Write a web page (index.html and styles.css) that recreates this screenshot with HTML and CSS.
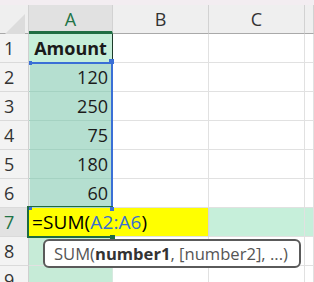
FILE: index.html
```html
<!DOCTYPE html>
<html lang="en">
<head>
<meta charset="UTF-8">
<title>Sheet</title>
<link rel="stylesheet" href="styles.css">
</head>
<body>

<div class="topbar"></div>

<div class="sheet">
    <!-- header row -->
    <div class="corner">
        <svg width="29" height="29" viewBox="0 0 29 29"><polygon points="25,9 25,29 5,29" fill="#dcdcdc"/></svg>
    </div>
    <div class="colhead on">A</div>
    <div class="colhead">B</div>
    <div class="colhead">C</div>
    <div class="colhead"></div>

    <div class="rowhead">1</div>
    <div class="cell title">Amount</div>
    <div class="cell"></div><div class="cell"></div><div class="cell"></div>

    <div class="rowhead">2</div>
    <div class="cell pick">120</div>
    <div class="cell"></div><div class="cell"></div><div class="cell"></div>

    <div class="rowhead">3</div>
    <div class="cell pick">250</div>
    <div class="cell"></div><div class="cell"></div><div class="cell"></div>

    <div class="rowhead">4</div>
    <div class="cell pick">75</div>
    <div class="cell"></div><div class="cell"></div><div class="cell"></div>

    <div class="rowhead">5</div>
    <div class="cell pick">180</div>
    <div class="cell"></div><div class="cell"></div><div class="cell"></div>

    <div class="rowhead">6</div>
    <div class="cell pick">60</div>
    <div class="cell"></div><div class="cell"></div><div class="cell"></div>

    <div class="rowhead on">7</div>
    <div class="cell edit">=SUM(<span class="ref">A2:A6</span>)</div>
    <div class="cell band"></div><div class="cell band"></div>

    <div class="rowhead">8</div>
    <div class="cell colband"></div>
    <div class="cell"></div><div class="cell"></div><div class="cell"></div>

    <div class="rowhead">9</div>
    <div class="cell colband"></div>
    <div class="cell"></div><div class="cell"></div><div class="cell"></div>

    <!-- range reference + active cell -->
    <div class="range">
        <i class="dot tl"></i><i class="dot tr"></i><i class="dot bl"></i><i class="dot br"></i>
    </div>
    <div class="active"><i class="handle"></i></div>

    <div class="tip">SUM(<b>number1</b>, [number2], ...)</div>
</div>

</body>
</html>
```

FILE: styles.css
```css
body {
    margin: 0;
    background: #fff;
    font-family: "Open Sans", sans-serif;
    overflow: hidden;
}

.topbar {
    height: 5px;
    background: #f3edf1;
}

/* ===== grid ===== */
.sheet {
    position: relative;
    display: grid;
    grid-template-columns: 29px 84px 96px 96px 1fr;
    grid-auto-rows: 29px;
}

.corner {
    background: #efefef;
    border-right: 1px solid #d2d2d2;
    border-bottom: 1px solid #a9a9a9;
    box-sizing: border-box;
}

.corner svg { display: block; }

.colhead {
    display: flex;
    align-items: center;
    justify-content: center;
    background: #efefef;
    color: #333;
    font-size: 18px;
    border-right: 1px solid #d2d2d2;
    border-bottom: 1px solid #a9a9a9;
    box-sizing: border-box;
}

.colhead.on {
    background: #e1e1e1;
    color: #217346;
    border-bottom: 3px solid #1f6f43;
    padding-top: 2px;
}

.rowhead {
    display: flex;
    align-items: center;
    padding-left: 4px;
    background: #f3f3f3;
    color: #333;
    font-size: 18px;
    border-right: 1px solid #cfcfcf;
    border-bottom: 1px solid #dadada;
    box-sizing: border-box;
}

.rowhead.on {
    background: #e2e2e2;
    color: #217346;
}

.cell {
    display: flex;
    align-items: center;
    justify-content: flex-end;
    padding-right: 4px;
    font-size: 18px;
    color: #1b1b1b;
    border-right: 1px solid #e1e1e1;
    border-bottom: 1px solid #e1e1e1;
    box-sizing: border-box;
}

.title {
    justify-content: center;
    padding-right: 0;
    font-weight: bold;
    background: #c6efda;
    border-right: 1px solid #1d3b2a;
}

.pick {
    background: #b5dfd0;
    border-bottom-color: #a5d2c2;
    box-shadow: inset 1px 0 #e4f1eb;
}

.edit {
    grid-column: span 2;
    justify-content: flex-start;
    padding-left: 3px;
    font-size: 19px;
    letter-spacing: 0.1px;
    color: #000;
    background: #ffff00;
    border-right: 1px solid #d6d6d6;
}

.ref { color: #3a6fd0; }

.band { background: #c6efda; }
.colband { background: #c6ebd7; border-right-color: #d6e9df; }

/* ===== overlays ===== */
.range {
    position: absolute;
    left: 29px;
    top: 57px;
    width: 84px;
    height: 145px;
    border-top: 2px solid #3a6fd6;
    border-right: 2px solid #3a6fd6;
    box-sizing: border-box;
}

.dot {
    position: absolute;
    background: #3a6fd6;
}

.dot.tl { left: 0; top: -3px; width: 3px; height: 4px; }
.dot.tr { right: -3px; top: -5px; width: 5px; height: 5px; }
.dot.bl { left: 0; bottom: -3px; width: 3px; height: 3px; }
.dot.br { right: -3px; bottom: -4px; width: 4px; height: 4px; }

.active {
    position: absolute;
    left: 27px;
    top: 201px;
    width: 86px;
    height: 32px;
    border-left: 2px solid #1e6b41;
    border-bottom: 2px solid #1e6b41;
    border-top: 1px solid #1e6b41;
    box-sizing: border-box;
}

.handle {
    position: absolute;
    right: -2px;
    bottom: -4px;
    width: 5px;
    height: 5px;
    background: #1e6b41;
}

.tip {
    position: absolute;
    left: 43px;
    top: 234px;
    width: 258px;
    height: 29px;
    padding-left: 9px;
    display: flex;
    align-items: center;
    background: #fff;
    border: 2px solid #5a5a5a;
    border-radius: 6px;
    box-sizing: border-box;
    font-size: 16.6px;
    color: #555;
    white-space: nowrap;
}

.tip b { color: #333; }
```
